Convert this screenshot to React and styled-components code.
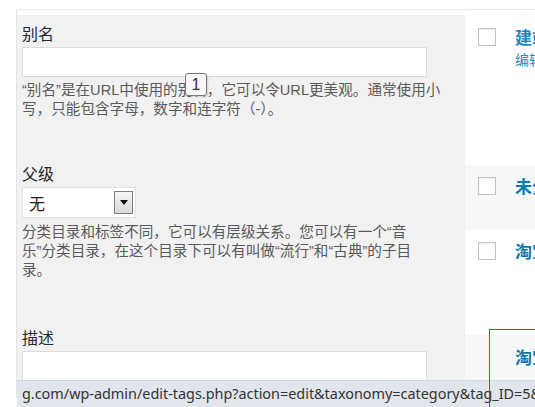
import React from 'react';
import styled, { createGlobalStyle } from 'styled-components';

const Global = createGlobalStyle`
  html, body {
    margin: 0;
    padding: 0;
    background: #fff;
    overflow: hidden;
  }
  body {
    width: 535px;
    height: 407px;
    font-family: "Liberation Sans", "Noto Sans CJK SC", sans-serif;
  }
`

const Frame = styled.div`
  margin: 9px 0 0 16px;
  border-top: 1px solid #ececec;
  border-left: 1px solid #e4e4e4;
  padding-top: 5px;
  height: 383px;
  display: flex;
  overflow: hidden;
`

const FormPanel = styled.div`
  width: 448px;
  flex: none;
  background: #f1f1f1;
  padding: 8px 0 0 5px;
  box-sizing: border-box;
  display: flex;
  flex-direction: column;
  align-items: flex-start;
  & > * {
    flex: none;
  }
`

const Label = styled.div`
  font-family: "Noto Sans CJK SC", sans-serif;
  font-size: 16px;
  line-height: 20px;
  color: #23282d;
  margin-top: ${p => p.$gap || 0}px;
`

const Input = styled.div`
  width: 405px;
  height: ${p => p.$h || 30}px;
  box-sizing: border-box;
  background: #fff;
  border: 1px solid #dcdcdc;
  margin-top: 4px;
`

const Desc = styled.div`
  position: relative;
  font-size: 14.6px;
  line-height: 19px;
  color: #5a5a5a;
  white-space: nowrap;
  margin-top: ${p => p.$gap || 4}px;
`

const Tip = styled.span`
  position: absolute;
  z-index: 2;
  left: 163px;
  top: -8px;
  width: 22px;
  height: 23px;
  box-sizing: border-box;
  background: #f7f7f7;
  border: 1px solid #7a7a7a;
  border-radius: 3px;
  font-size: 16px;
  line-height: 21px;
  text-align: center;
  color: #333;
  box-shadow: 1px 1px 2px rgba(0,0,0,0.15);
`

const Select = styled.div`
  width: 114px;
  height: 31px;
  box-sizing: border-box;
  margin-top: 4px;
  background: #fff;
  border: 1px solid #e0e0e0;
  display: flex;
  align-items: center;
  justify-content: space-between;
  padding: 0 2px 0 6px;
`

const SelectText = styled.span`
  font-family: "Noto Sans CJK SC", sans-serif;
  font-size: 16px;
  color: #222;
`

const ArrowBtn = styled.span`
  width: 19px;
  height: 23px;
  box-sizing: border-box;
  border: 1px solid #7d7d7d;
  background: linear-gradient(#f6f6f6, #d9d9d9);
  display: flex;
  align-items: center;
  justify-content: center;
  &::after {
    content: "";
    border-left: 4px solid transparent;
    border-right: 4px solid transparent;
    border-top: 5px solid #111;
  }
`

const ListPanel = styled.div`
  flex: 1;
  min-width: 0;
  background: #fff;
  display: flex;
  flex-direction: column;
`

const Row = styled.div`
  height: ${p => p.$h}px;
  flex: none;
  box-sizing: border-box;
  background: ${p => (p.$alt ? '#f8f8f8' : '#fff')};
  padding: ${p => p.$pad || 10}px 0 0 13px;
  display: flex;
  align-items: flex-start;
  gap: 19px;
  white-space: nowrap;
  overflow: hidden;
`

const Check = styled.span`
  width: 18px;
  height: 18px;
  flex: none;
  box-sizing: border-box;
  margin-top: 2px;
  border: 1px solid #c3c3c3;
  background: #fff;
  box-shadow: inset 0 1px 2px rgba(0,0,0,0.07);
  visibility: ${p => (p.$hidden ? 'hidden' : 'visible')};
`

const Cell = styled.div`
  display: flex;
  flex-direction: column;
`

const Title = styled.span`
  font-family: "Noto Sans CJK SC", sans-serif;
  font-size: 17px;
  line-height: 22px;
  font-weight: bold;
  color: ${p => p.$tone || '#0a79b0'};
`

const Action = styled.span`
  font-family: "Noto Sans CJK SC", sans-serif;
  font-size: 14px;
  line-height: 22px;
  color: #2a8bc0;
`

const StatusBar = styled.div`
  position: fixed;
  left: 17px;
  right: 0;
  bottom: 0;
  height: 27px;
  box-sizing: border-box;
  background: #e1e5ec;
  border-top: 1px solid #d3d8df;
  padding-left: 5px;
  font-family: "Noto Sans", "Liberation Sans", sans-serif;
  font-size: 14.4px;
  line-height: 25px;
  color: #333;
  white-space: nowrap;
  overflow: hidden;
`

const Highlight = styled.div`
  position: fixed;
  z-index: 5;
  left: 489px;
  top: 329px;
  width: 100px;
  height: 120px;
  border: 1px solid #e0262e;
  pointer-events: none;
`

export default function App() {
  return (
    <>
      <Global />
      <Frame>
        <FormPanel>
          <Label>别名</Label>
          <Input />
          <Desc>
            “别名”是在URL中使用的别名，它可以令URL更美观。通常使用小<br />
            写，只能包含字母，数字和连字符（-）。
            <Tip>1</Tip>
          </Desc>
          <Label $gap={44}>父级</Label>
          <Select>
            <SelectText>无</SelectText>
            <ArrowBtn />
          </Select>
          <Desc $gap={5}>
            分类目录和标签不同，它可以有层级关系。您可以有一个“音<br />
            乐”分类目录，在这个目录下可以有叫做“流行”和“古典”的子目<br />
            录。
          </Desc>
          <Label $gap={47}>描述</Label>
          <Input $h={80} />
        </FormPanel>
        <ListPanel>
          <Row $h={150} $pad={11}>
            <Check />
            <Cell>
              <Title $tone="#1f86bd">建站技巧</Title>
              <Action>编辑 | 快速编辑</Action>
            </Cell>
          </Row>
          <Row $h={65} $alt>
            <Check />
            <Cell>
              <Title>未分类</Title>
            </Cell>
          </Row>
          <Row $h={105}>
            <Check />
            <Cell>
              <Title>淘宝客</Title>
            </Cell>
          </Row>
          <Row $h={80} $alt $pad={11}>
            <Check $hidden />
            <Cell>
              <Title>淘宝推荐</Title>
            </Cell>
          </Row>
        </ListPanel>
      </Frame>
      <StatusBar>g.com/wp-admin/edit-tags.php?action=edit&amp;taxonomy=category&amp;tag_ID=5&amp;post_type=post</StatusBar>
      <Highlight />
    </>
  );
}
